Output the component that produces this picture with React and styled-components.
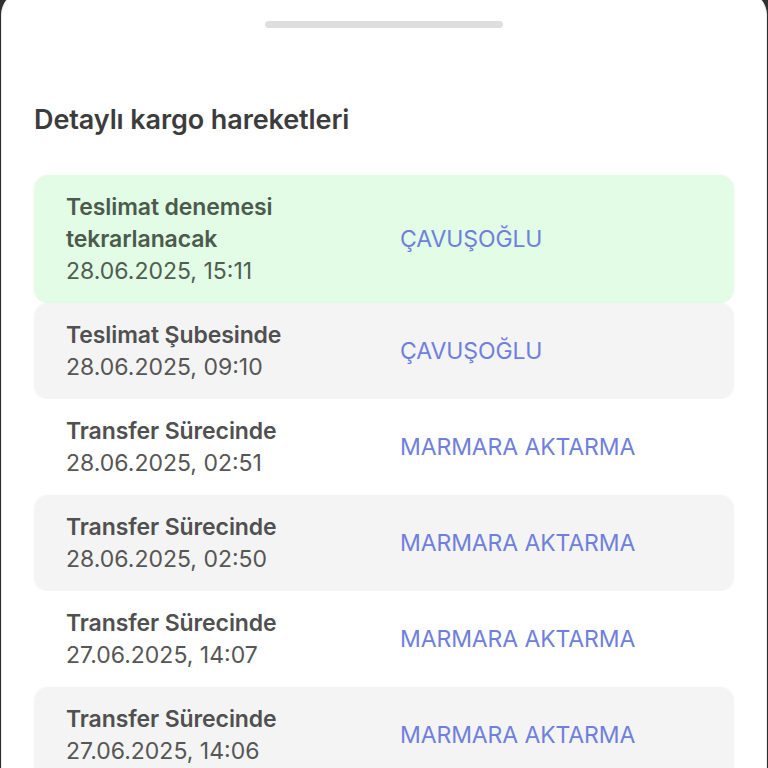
import React from 'react';
import styled, { createGlobalStyle } from 'styled-components';

const GlobalStyle = createGlobalStyle`
	html, body {
		margin: 0;
		padding: 0;
		background: #2f2f2f;
		overflow: hidden;
	}

	body {
		font-family: Inter, 'Noto Sans', sans-serif;
		-webkit-font-smoothing: antialiased;
	}
`;

const Sheet = styled.div`
	margin: -10px 1px 0;
	min-height: 800px;
	background: #fff;
	border: 1px solid #ebebeb;
	border-radius: 25px 25px 0 0;
	padding: 30px 32px 0;
	box-sizing: border-box;
`;

const Handle = styled.div`
	width: 238px;
	height: 7px;
	margin: 0 auto;
	border-radius: 4px;
	background: #dedede;
`;

const Title = styled.h2`
	margin: 76px 0 0;
	font-size: 27px;
	line-height: 32px;
	font-weight: 600;
	letter-spacing: -0.1px;
	color: #3c3c3c;
`;

const List = styled.div`
	margin-top: 39px;
	display: flex;
	flex-direction: column;
`;

const bgFor = {
	active: '#e2fce5',
	gray: '#f4f4f4',
	plain: '#fff',
};

const Row = styled.div`
	display: grid;
	grid-template-columns: 334px 1fr;
	align-items: center;
	padding: 16px 33px 16px 32px;
	border-radius: 14px;
	background: ${(p) => bgFor[p.$tone]};
	box-shadow: ${(p) => (p.$tone === 'plain' ? 'none' : '0 0 3px rgba(0, 0, 0, 0.03)')};
	font-size: 23px;
	line-height: 32px;
	color: ${(p) => (p.$tone === 'active' ? '#4e5e50' : '#565656')};
`;

const Status = styled.div`
	font-weight: 600;
	letter-spacing: -0.1px;
	color: ${(p) => (p.$active ? '#4a5b4c' : '#505050')};
`;

const Date = styled.div`
	font-weight: 400;
`;

const Place = styled.div`
	font-weight: 400;
	letter-spacing: -0.1px;
	color: #6f80dc;
`;

const moves = [
	{ status: ['Teslimat denemesi', 'tekrarlanacak'], date: '28.06.2025, 15:11', place: 'ÇAVUŞOĞLU' },
	{ status: ['Teslimat Şubesinde'], date: '28.06.2025, 09:10', place: 'ÇAVUŞOĞLU' },
	{ status: ['Transfer Sürecinde'], date: '28.06.2025, 02:51', place: 'MARMARA AKTARMA' },
	{ status: ['Transfer Sürecinde'], date: '28.06.2025, 02:50', place: 'MARMARA AKTARMA' },
	{ status: ['Transfer Sürecinde'], date: '27.06.2025, 14:07', place: 'MARMARA AKTARMA' },
	{ status: ['Transfer Sürecinde'], date: '27.06.2025, 14:06', place: 'MARMARA AKTARMA' },
];

const toneOf = (i) => (i === 0 ? 'active' : i % 2 === 1 ? 'gray' : 'plain');

export default function App() {
	return (
		<>
			<GlobalStyle />
			<Sheet>
				<Handle />
				<Title>Detaylı kargo hareketleri</Title>
				<List>
					{moves.map((m, i) => (
						<Row key={i} $tone={toneOf(i)}>
							<div>
								{m.status.map((line) => (
									<Status key={line} $active={i === 0}>
										{line}
									</Status>
								))}
								<Date>{m.date}</Date>
							</div>
							<Place>{m.place}</Place>
						</Row>
					))}
				</List>
			</Sheet>
		</>
	);
}
